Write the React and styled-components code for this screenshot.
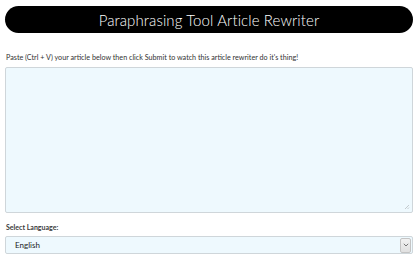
import React from "react";
import styled, { createGlobalStyle } from "styled-components";

const GlobalStyle = createGlobalStyle`
  html, body {
    margin: 0;
    padding: 0;
    background: #ffffff;
  }
  body {
    font-family: Lato, "Open Sans", sans-serif;
  }
`;

const Page = styled.div`
  display: flex;
  flex-direction: column;
  padding: 6px 5px 0 5px;
  width: 418px;
  box-sizing: border-box;
`;

const TitleBar = styled.h1`
  margin: 0;
  height: 27px;
  border-radius: 14px;
  background: #000000;
  color: #ffffff;
  display: flex;
  align-items: center;
  justify-content: center;
  font-family: Lato, sans-serif;
  font-weight: 300;
  font-size: 15px;
  letter-spacing: 0.1px;
`;

const Hint = styled.p`
  margin: 20px 0 0 1px;
  font-size: 7.2px;
  line-height: 9px;
  color: #333333;
`;

const TextWrap = styled.div`
  position: relative;
  margin-top: 5px;
  display: flex;
`;

const TextBox = styled.textarea`
  flex: 1;
  height: 146px;
  box-sizing: border-box;
  background: #eef9fe;
  border: 1px solid #cfd6da;
  border-radius: 2px;
  resize: none;
  font-family: Lato, sans-serif;
  font-size: 9px;
  outline: none;
`;

const Grip = styled.svg`
  position: absolute;
  right: 3px;
  bottom: 3px;
  pointer-events: none;
`;

const Label = styled.label`
  margin: 10px 0 0 1px;
  font-size: 7px;
  line-height: 9px;
  font-weight: 700;
  color: #3a3a3a;
`;

const SelectWrap = styled.div`
  margin-top: 4px;
  height: 18px;
  box-sizing: border-box;
  background: #eef9fe;
  border: 1px solid #cfd6da;
  border-radius: 2px;
  display: flex;
  align-items: center;
  justify-content: space-between;
  padding: 0 1px 0 9px;
  font-size: 8px;
  color: #222222;
`;

const ArrowBox = styled.div`
  width: 11px;
  height: 15px;
  box-sizing: border-box;
  border: 1px solid #c4c4c4;
  border-radius: 2px;
  background: linear-gradient(#f2f2f2, #e0e0e0);
  display: flex;
  align-items: center;
  justify-content: center;
`;

const App = () => {
  return (
    <Page>
      <GlobalStyle />
      <TitleBar>Paraphrasing Tool Article Rewriter</TitleBar>
      <Hint>
        Paste (Ctrl + V) your article below then click Submit to watch this article rewriter do it's thing!
      </Hint>
      <TextWrap>
        <TextBox />
        <Grip width="6" height="6" viewBox="0 0 6 6">
          <path d="M5 1 L1 5 M5 3.5 L3.5 5" stroke="#b8bec2" strokeWidth="0.8" />
        </Grip>
      </TextWrap>
      <Label>Select Language:</Label>
      <SelectWrap>
        <span>English</span>
        <ArrowBox>
          <svg width="6" height="4" viewBox="0 0 6 4">
            <path d="M0.8 0.8 L3 3 L5.2 0.8" fill="none" stroke="#777" strokeWidth="1" />
          </svg>
        </ArrowBox>
      </SelectWrap>
    </Page>
  );
};

export default App;
